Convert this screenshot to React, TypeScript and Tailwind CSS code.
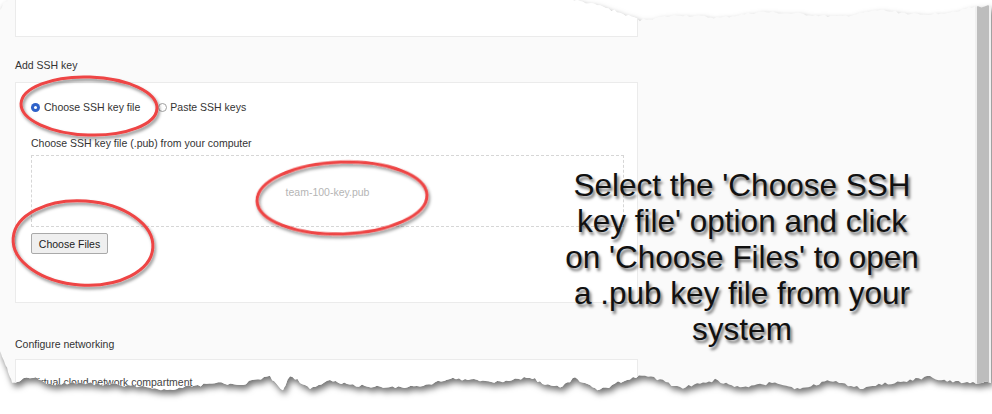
import React from "react";

type Pt = [number, number];

// torn paper outline, roughed up a little with seeded noise
function rough(pts: Pt[], step: number, amp: number, seed: number): Pt[] {
  let s = seed;
  const rnd = () => {
    s = (s * 9301 + 49297) % 233280;
    return s / 233280;
  };
  const out: Pt[] = [];
  for (let i = 0; i < pts.length - 1; i++) {
    const [x1, y1] = pts[i];
    const [x2, y2] = pts[i + 1];
    const n = Math.max(1, Math.round(Math.hypot(x2 - x1, y2 - y1) / step));
    for (let k = 0; k < n; k++) {
      const t = k / n;
      out.push([x1 + (x2 - x1) * t, y1 + (y2 - y1) * t + (rnd() - 0.5) * amp]);
    }
  }
  out.push(pts[pts.length - 1]);
  return out;
}

const topEdge: Pt[] = [
  [0, 9], [5, 2], [12, -3], [560, -3], [600, 6], [640, 20], [680, 15], [720, 18],
  [760, 12], [800, 14], [840, 17], [880, 10], [920, 15], [950, 12], [975, 7], [991, 6],
];

const bottomEdge: Pt[] = [
  [0, 350], [6, 366], [12, 382], [20, 380], [33, 377], [50, 385], [70, 383], [100, 384],
  [140, 386], [170, 390], [195, 386], [215, 383], [240, 385], [255, 380], [270, 377],
  [283, 390], [290, 375], [300, 382], [310, 388], [330, 381], [350, 385], [380, 387],
  [420, 387], [450, 378], [480, 381], [500, 382], [530, 377], [545, 384], [560, 387],
  [575, 378], [590, 386], [600, 390], [615, 384], [630, 378], [645, 376], [660, 380],
  [680, 388], [700, 384], [715, 380], [740, 388], [760, 385], [775, 382], [800, 390],
  [830, 380], [860, 388], [885, 384], [910, 380], [930, 377], [950, 381], [970, 383], [991, 383],
];

function paperClip() {
  const top = rough(topEdge, 3, 2.5, 17);
  const bottom = rough(bottomEdge, 3, 3, 42).reverse();
  const pts = [...top, ...bottom];
  return "polygon(" + pts.map(([x, y]) => `${x.toFixed(1)}px ${y.toFixed(1)}px`).join(", ") + ")";
}

function Radio({ checked }: { checked?: boolean }) {
  if (checked) {
    return (
      <span className="w-[9px] h-[9px] rounded-full bg-[#2f62c9] flex items-center justify-center">
        <span className="w-[3px] h-[3px] rounded-full bg-white" />
      </span>
    );
  }
  return <span className="w-[9px] h-[9px] rounded-full border border-[#a0a0a0] bg-white" />;
}

export default function App() {
  const clip = paperClip();

  return (
    <div className="relative w-[992px] h-[414px] overflow-hidden bg-white font-['Liberation_Sans',Arial,sans-serif]">
      <div className="[filter:drop-shadow(2px_4px_3px_rgba(0,0,0,0.55))]">
        <div className="relative w-[991px] h-[414px] bg-[#fafafa] flex" style={{ clipPath: clip }}>
          <div className="flex-1 pl-[15px]">
            <div className="w-[623px] flex flex-col text-[10.5px] leading-[14px] text-[#333]">
              <div className="h-[37px] border-x border-b border-[#ebebeb] bg-white" />

              <div className="mt-[21px]">Add SSH key</div>

              <div className="mt-[10px] h-[221px] border border-[#ebebeb] bg-white pl-[15px] pr-[13px] pt-[17px]">
                <div className="flex items-center">
                  <label className="flex items-center gap-[4px]">
                    <Radio checked />
                    <span>Choose SSH key file</span>
                  </label>
                  <label className="flex items-center gap-[3px] ml-[18px]">
                    <Radio />
                    <span>Paste SSH keys</span>
                  </label>
                </div>
                <div className="mt-[22px]">Choose SSH key file (.pub) from your computer</div>
                <div className="mt-[5px] h-[72px] border border-dashed border-[#d6d6d6] flex items-center justify-center">
                  <span className="text-[#b5b5b5] mt-[2px]">team-100-key.pub</span>
                </div>
                <button className="mt-[6px] w-[77px] h-[21px] border border-[#a9a9a9] rounded-[2px] bg-[#efefef] text-[#222] text-[10.5px]">
                  Choose Files
                </button>
              </div>

              <div className="mt-[34px]">Configure networking</div>

              <div className="mt-[8px] h-[80px] border border-[#ebebeb] bg-white pl-[15px] pt-[15px] text-[#444]">
                Virtual cloud network compartment
              </div>
            </div>
          </div>

          <div className="w-[16px] bg-[#f0f0f0] pl-[2px]">
            <div className="w-[12px] h-full bg-[#bdbdbd]" />
          </div>

          {/* callout text */}
          <div className="absolute left-[562px] top-[167px] w-[360px] text-center text-[31.5px] leading-[36px] text-[#111] [text-shadow:2px_3px_3px_rgba(0,0,0,0.55)]">
            Select the 'Choose SSH key file' option and click on 'Choose Files' to open a .pub key file from your system
          </div>

          {/* red highlight rings */}
          <svg className="absolute inset-0 pointer-events-none" width="991" height="414">
            <defs>
              <filter id="ringShadow" x="-20%" y="-20%" width="140%" height="140%">
                <feDropShadow dx="1.5" dy="2.5" stdDeviation="1.8" floodColor="#000" floodOpacity="0.45" />
              </filter>
            </defs>
            <g fill="none" stroke="#ee4444" strokeWidth="3" filter="url(#ringShadow)">
              <ellipse cx="89" cy="106" rx="68" ry="29" transform="rotate(2 89 106)" />
              <ellipse cx="342" cy="198" rx="85" ry="36" transform="rotate(-2 342 198)" />
              <ellipse cx="83" cy="243" rx="70" ry="42" transform="rotate(4 83 243)" />
            </g>
          </svg>
        </div>
      </div>
    </div>
  );
}
